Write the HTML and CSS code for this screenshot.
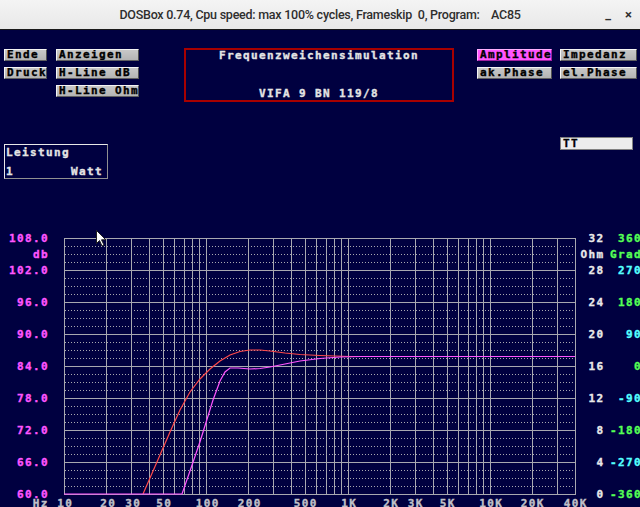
FILE: index.html
```html
<!DOCTYPE html>
<html>
<head>
<meta charset="utf-8">
<link rel="stylesheet" href="styles.css">
</head>
<body>
<div class="window">
  <div class="titlebar">
    <span></span>
    <span class="title">DOSBox 0.74, Cpu speed: max 100% cycles, Frameskip  0, Program:    AC85</span>
    <span class="winbtns"><span class="wmin">_</span><span class="wclose">×</span></span>
  </div>
  <div class="screen">
    <div class="toprow">
      <div class="btngrid left">
        <div class="btn">Ende</div><div class="btn">Anzeigen</div>
        <div class="btn">Druck</div><div class="btn">H-Line dB</div>
        <div class="btn col2">H-Line Ohm</div>
      </div>
      <div class="titlebox">
        <div>Frequenzweichensimulation</div>
        <div>VIFA 9 BN 119/8</div>
      </div>
      <div class="btngrid right">
        <div class="btn active">Amplitude</div><div class="btn">Impedanz</div>
        <div class="btn">ak.Phase</div><div class="btn">el.Phase</div>
      </div>
    </div>
    <div class="midrow">
      <div class="leistung">
        <div>Leistung</div>
        <div class="lrow"><span>1</span><span>Watt</span></div>
      </div>
      <div class="ttbox">TT</div>
    </div>
    <svg class="chart" width="640" height="282" viewBox="0 225 640 282">
      <path class="grid" d="M64.5 238V494M106.5 238V494M131.5 238V494M149.5 238V494M163.5 238V494M174.5 238V494M184.5 238V494M192.5 238V494M199.5 238V494M206.5 238V494M248.5 238V494M273.5 238V494M291.5 238V494M305.5 238V494M316.5 238V494M326.5 238V494M334.5 238V494M341.5 238V494M348.5 238V494M390.5 238V494M415.5 238V494M433.5 238V494M447.5 238V494M458.5 238V494M468.5 238V494M476.5 238V494M483.5 238V494M490.5 238V494M532.5 238V494M557.5 238V494M575.5 238V494"/>
      <path class="grid" d="M64 238.5H576M64 270.5H576M64 302.5H576M64 334.5H576M64 366.5H576M64 398.5H576M64 430.5H576M64 462.5H576M64 494.5H576"/>
      <path class="grid dots" d="M65 246.5H575M65 254.5H575M65 262.5H575M65 278.5H575M65 286.5H575M65 294.5H575M65 310.5H575M65 318.5H575M65 326.5H575M65 342.5H575M65 350.5H575M65 358.5H575M65 374.5H575M65 382.5H575M65 390.5H575M65 406.5H575M65 414.5H575M65 422.5H575M65 438.5H575M65 446.5H575M65 454.5H575M65 470.5H575M65 478.5H575M65 486.5H575"/>
      <path class="curve red" d="M143 494L150 478L160 455L170 432L180 410L190 392L200 379L210 369L220 361L230 355L240 351.5L250 350L260 350L270 351L285 353L300 354.5L320 355.5L350 356.5L575 356.5"/>
      <path class="curve mag" d="M64 494L182 494L190 471L200 441.7L213 400L220 381L225 372L230 368L238 368L250 369L260 368.5L270 367L285 364L300 361L320 358.5L340 357L360 356.5L575 356.5"/>
      <g class="lbl mag-t" text-anchor="end">
        <text x="49" y="242">108.0</text>
        <text x="49" y="258">db</text>
        <text x="49" y="274">102.0</text>
        <text x="49" y="306">96.0</text>
        <text x="49" y="338">90.0</text>
        <text x="49" y="370">84.0</text>
        <text x="49" y="402">78.0</text>
        <text x="49" y="434">72.0</text>
        <text x="49" y="466">66.0</text>
        <text x="49" y="498">60.0</text>
      </g>
      <g class="lbl ohm-t" text-anchor="end">
        <text x="604.5" y="242">32</text>
        <text x="604.5" y="258">Ohm</text>
        <text x="604.5" y="274">28</text>
        <text x="604.5" y="306">24</text>
        <text x="604.5" y="338">20</text>
        <text x="604.5" y="370">16</text>
        <text x="604.5" y="402">12</text>
        <text x="604.5" y="434">8</text>
        <text x="604.5" y="466">4</text>
        <text x="604.5" y="498">0</text>
      </g>
      <g class="lbl" text-anchor="end">
        <text class="grn" x="642" y="242">360</text>
        <text class="grn" x="642" y="258">Grad</text>
        <text class="cyn" x="642" y="274">270</text>
        <text class="grn" x="642" y="306">180</text>
        <text class="cyn" x="642" y="338">90</text>
        <text class="grn" x="642" y="370">0</text>
        <text class="cyn" x="642" y="402">-90</text>
        <text class="grn" x="642" y="434">-180</text>
        <text class="cyn" x="642" y="466">-270</text>
        <text class="grn" x="642" y="498">-360</text>
      </g>
      <g class="lbl hz-t" text-anchor="middle">
        <text x="40.7" y="507">Hz</text>
        <text x="65.2" y="507">10</text>
        <text x="108.2" y="507">20</text>
        <text x="133.2" y="507">30</text>
        <text x="164.2" y="507">50</text>
        <text x="207.7" y="507">100</text>
        <text x="249.7" y="507">200</text>
        <text x="305.7" y="507">500</text>
        <text x="349.2" y="507">1K</text>
        <text x="391.2" y="507">2K</text>
        <text x="415.7" y="507">3K</text>
        <text x="447.7" y="507">5K</text>
        <text x="491.2" y="507">10K</text>
        <text x="532.7" y="507">20K</text>
        <text x="575.7" y="507">40K</text>
      </g>
    </svg>
  </div>
  <svg class="cursor" width="12" height="17" viewBox="0 0 12 17">
    <path d="M0.5 0.5L0.5 13.5L3.5 10.5L6 16L8 15L5.5 9.8L9.8 9.8Z" fill="#ffffff" stroke="#202020" stroke-width="1"/>
  </svg>
</div>
</body>
</html>
```

FILE: styles.css
```css
html, body {
  margin: 0;
  padding: 0;
  background: #000040;
}

.window {
  position: relative;
  width: 640px;
  height: 507px;
  overflow: hidden;
}

.titlebar {
  height: 29px;
  border-bottom: 1px solid #1a1a1a;
  background: linear-gradient(#f4f4f4, #e8e8e8);
  display: grid;
  grid-template-columns: 1fr auto 1fr;
  align-items: center;
  font-family: Roboto, "Noto Sans", sans-serif;
  font-weight: 500;
  font-size: 12.5px;
  color: #2e2e2e;
}

.title {
  white-space: pre;
  letter-spacing: -0.25px;
}

.winbtns {
  justify-self: end;
  display: flex;
  gap: 14px;
  padding-right: 8px;
  font-size: 13px;
  font-weight: 700;
}

.screen {
  height: 477px;
  display: flex;
  flex-direction: column;
  background: #000040;
  font-family: "DejaVu Sans Mono", monospace;
  font-weight: bold;
  font-size: 11px;
  letter-spacing: 1.38px;
  line-height: 10px;
  color: #e4e4e4;
  -webkit-text-stroke: 0.35px currentColor;
}

.toprow {
  display: flex;
  align-items: flex-start;
  padding: 18px 0 0 4px;
}

.btngrid {
  display: grid;
  row-gap: 6px;
  margin-top: 1px;
}

.btngrid.left {
  grid-template-columns: 43px 83px;
  column-gap: 9px;
}

.btngrid.right {
  grid-template-columns: 75px 77px;
  column-gap: 8px;
  margin-left: 23px;
}

.btn {
  box-sizing: border-box;
  height: 12px;
  border: 1px solid;
  border-color: #f4f4f4 #505050 #606060 #f4f4f4;
  background: linear-gradient(#c8c8c8, #b4b4b4);
  color: #000000;
  padding-left: 2px;
  white-space: pre;
  overflow: hidden;
}

.btn.col2 {
  grid-column: 2;
}

.btn.active {
  background: #ff55ff;
  border-color: #ffb0ff #a020a0 #a020a0 #ffb0ff;
}

.titlebox {
  box-sizing: border-box;
  margin-left: 45px;
  width: 270px;
  height: 54px;
  border: 2px solid #a80000;
  display: flex;
  flex-direction: column;
  justify-content: space-between;
  align-items: center;
  padding: 1px 0 1px 0;
  white-space: pre;
}

.midrow {
  display: flex;
  align-items: flex-start;
  margin-top: 35px;
  padding-left: 4px;
}

.leistung {
  box-sizing: border-box;
  margin-top: 7px;
  width: 104px;
  height: 35px;
  border: 1px solid;
  border-color: #e8e8e8 #909090 #909090 #e8e8e8;
  display: flex;
  flex-direction: column;
  justify-content: space-between;
  padding: 3px 4px 1px 1px;
}

.lrow {
  display: flex;
  justify-content: space-between;
}

.ttbox {
  box-sizing: border-box;
  margin-left: auto;
  margin-right: 7px;
  width: 73px;
  height: 13px;
  border: 1px solid #808080;
  background: #ececec;
  color: #000000;
  padding-left: 2px;
  line-height: 11px;
}

.chart {
  display: block;
  margin-top: auto;
  -webkit-text-stroke: 0;
}

.grid {
  fill: none;
  stroke: #a8a8b0;
  stroke-width: 1;
}

.grid.dots {
  stroke-dasharray: 1 2;
}

.curve {
  fill: none;
  stroke-width: 1.2;
}

.curve.red {
  stroke: #ff4a4a;
}

.curve.mag {
  stroke: #ff55ff;
}

.lbl {
  font-family: "DejaVu Sans Mono", monospace;
  font-weight: bold;
  font-size: 11px;
  letter-spacing: 1.38px;
  stroke-width: 0.35px;
}

.mag-t {
  fill: #ff55ff;
  stroke: #ff55ff;
}

.ohm-t {
  fill: #e8e8e8;
  stroke: #e8e8e8;
}

.grn {
  fill: #55ff55;
  stroke: #55ff55;
}

.cyn {
  fill: #55ffff;
  stroke: #55ffff;
}

.hz-t {
  fill: #c0c0c8;
  stroke: #c0c0c8;
}

.cursor {
  position: absolute;
  left: 96px;
  top: 230px;
}
```
